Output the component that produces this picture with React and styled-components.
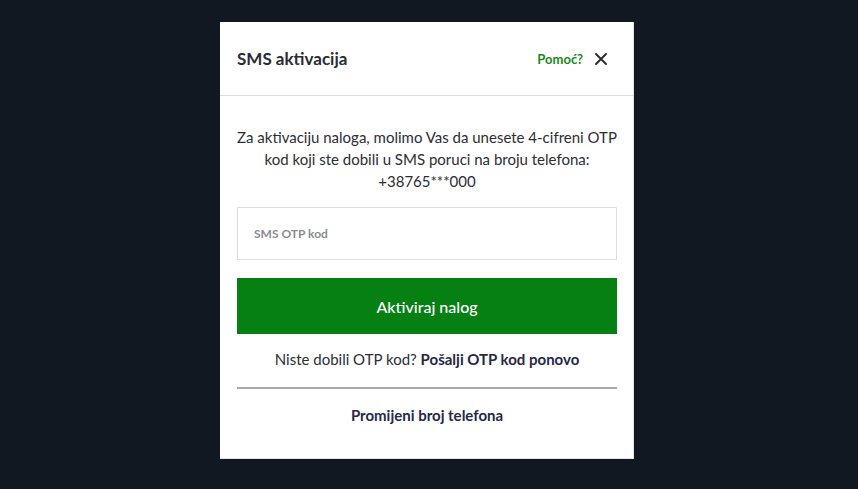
import React from "react";
import styled, { createGlobalStyle } from "styled-components";

const Global = createGlobalStyle`
  html, body { margin: 0; padding: 0; background: #121821; }
  body { font-family: "Lato", "Noto Sans", sans-serif; }
  * { box-sizing: border-box; }
`;

const Page = styled.div`
  min-height: 489px;
  display: flex;
  justify-content: center;
  align-items: flex-start;
  padding: 22px 4px 0 0;
`;

const Modal = styled.div`
  width: 414px;
  height: 437px;
  background: #ffffff;
  box-shadow: inset -1px -1px 0 #e4e4e4;
  display: flex;
  flex-direction: column;
`;

const Header = styled.div`
  height: 74px;
  flex-shrink: 0;
  display: flex;
  align-items: center;
  justify-content: space-between;
  padding: 0 26px 0 17px;
  border-bottom: 1px solid #dcdcdc;
`;

const Title = styled.h2`
  margin: 0;
  font-size: 17px;
  font-weight: 700;
  color: #2b2b33;
`;

const HeaderActions = styled.div`
  display: flex;
  align-items: center;
  gap: 11px;
`;

const HelpLink = styled.a`
  font-size: 13px;
  font-weight: 700;
  color: #168a1b;
  text-decoration: none;
`;

const CloseButton = styled.button`
  border: 0;
  background: none;
  padding: 0;
  width: 14px;
  height: 14px;
  display: flex;
  cursor: pointer;
`;

const Body = styled.div`
  padding: 30px 17px 0;
  display: flex;
  flex-direction: column;
`;

const Intro = styled.p`
  margin: 0 -4px;
  text-align: center;
  font-size: 15px;
  line-height: 22px;
  color: #2d2d33;
`;

const Field = styled.div`
  margin-top: 15px;
  height: 53px;
  border: 1px solid #dedede;
  display: flex;
  align-items: center;
  padding: 0 16px;
`;

const Input = styled.input`
  border: 0;
  outline: none;
  padding: 0;
  width: 100%;
  font-family: inherit;
  font-size: 12px;
  font-weight: 700;
  color: #333;
  &::placeholder { color: #8a8a92; }
`;

const PrimaryButton = styled.button`
  margin-top: 18px;
  height: 56px;
  border: 0;
  background: #067f13;
  color: #ffffff;
  font-family: inherit;
  font-size: 16px;
  font-weight: 500;
  cursor: pointer;
`;

const Resend = styled.p`
  margin: 14px 0 0;
  text-align: center;
  font-size: 15px;
  line-height: 22px;
  color: #2d2d33;
`;

const Strong = styled.a`
  font-weight: 700;
  color: #282846;
  text-decoration: none;
`;

const Divider = styled.hr`
  margin: 17px 0 0;
  border: 0;
  height: 2px;
  background: #a8a8ac;
`;

const SecondaryLink = styled.a`
  margin-top: 15px;
  text-align: center;
  font-size: 15px;
  line-height: 22px;
  font-weight: 700;
  color: #282846;
  text-decoration: none;
`;

export default function App() {
  return (
    <>
      <Global />
      <Page>
        <Modal>
          <Header>
            <Title>SMS aktivacija</Title>
            <HeaderActions>
              <HelpLink href="#">Pomoć?</HelpLink>
              <CloseButton aria-label="Zatvori">
                <svg width="14" height="14" viewBox="0 0 14 14">
                  <path d="M2 2L12 12M12 2L2 12" stroke="#2b2b33" strokeWidth="2" strokeLinecap="round" />
                </svg>
              </CloseButton>
            </HeaderActions>
          </Header>
          <Body>
            <Intro>
              Za aktivaciju naloga, molimo Vas da unesete 4-cifreni OTP kod koji ste dobili u SMS poruci na broju telefona: +38765***000
            </Intro>
            <Field>
              <Input placeholder="SMS OTP kod" />
            </Field>
            <PrimaryButton>Aktiviraj nalog</PrimaryButton>
            <Resend>
              Niste dobili OTP kod? <Strong href="#">Pošalji OTP kod ponovo</Strong>
            </Resend>
            <Divider />
            <SecondaryLink href="#">Promijeni broj telefona</SecondaryLink>
          </Body>
        </Modal>
      </Page>
    </>
  );
}
